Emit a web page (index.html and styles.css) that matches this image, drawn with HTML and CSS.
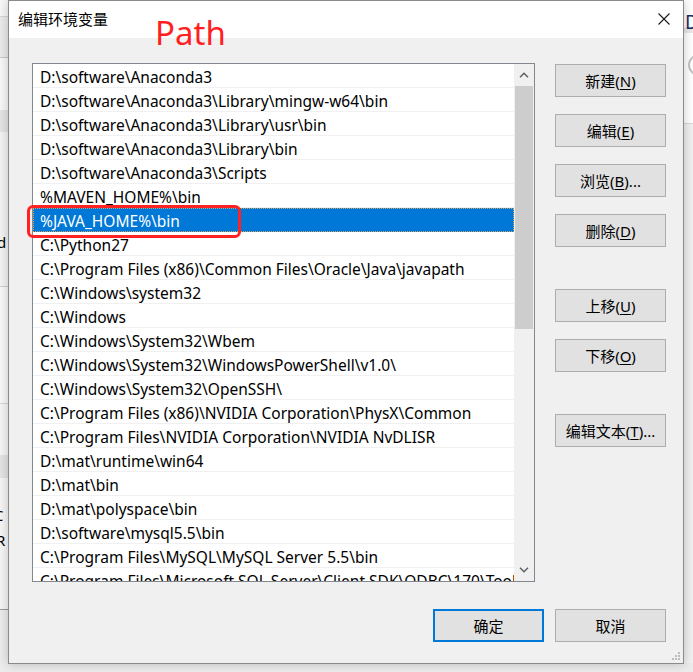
FILE: index.html
```html
<!DOCTYPE html>
<html lang="zh-CN">
<head>
<meta charset="utf-8">
<title>编辑环境变量</title>
<link rel="stylesheet" href="styles.css">
</head>
<body>
<div class="desk">
  <div class="back back-left">
    <span class="bl-d">d</span>
    <span class="bl-c">C</span>
    <span class="bl-r">R</span>
  </div>
  <div class="back back-right">
    <span class="br-d">D/</span>
    <span class="br-c"></span>
  </div>
  <div class="back back-bottom"></div>

  <div class="dialog">
    <div class="titlebar">
      <span class="title">编辑环境变量</span>
      <span class="close" aria-label="关闭">
        <svg width="12" height="12" viewBox="0 0 12 12"><path d="M0.5 0.5 L11.5 11.5 M11.5 0.5 L0.5 11.5" stroke="#1a1a1a" stroke-width="1.1" fill="none"/></svg>
      </span>
    </div>
    <div class="body">
      <div class="main">
        <div class="listbox">
          <div class="rows">
            <div class="row">D:\software\Anaconda3</div>
            <div class="row">D:\software\Anaconda3\Library\mingw-w64\bin</div>
            <div class="row">D:\software\Anaconda3\Library\usr\bin</div>
            <div class="row">D:\software\Anaconda3\Library\bin</div>
            <div class="row">D:\software\Anaconda3\Scripts</div>
            <div class="row">%MAVEN_HOME%\bin</div>
            <div class="row selected">%JAVA_HOME%\bin</div>
            <div class="row">C:\Python27</div>
            <div class="row">C:\Program Files (x86)\Common Files\Oracle\Java\javapath</div>
            <div class="row">C:\Windows\system32</div>
            <div class="row">C:\Windows</div>
            <div class="row">C:\Windows\System32\Wbem</div>
            <div class="row">C:\Windows\System32\WindowsPowerShell\v1.0\</div>
            <div class="row">C:\Windows\System32\OpenSSH\</div>
            <div class="row">C:\Program Files (x86)\NVIDIA Corporation\PhysX\Common</div>
            <div class="row">C:\Program Files\NVIDIA Corporation\NVIDIA NvDLISR</div>
            <div class="row">D:\mat\runtime\win64</div>
            <div class="row">D:\mat\bin</div>
            <div class="row">D:\mat\polyspace\bin</div>
            <div class="row">D:\software\mysql5.5\bin</div>
            <div class="row">C:\Program Files\MySQL\MySQL Server 5.5\bin</div>
            <div class="row">C:\Program Files\Microsoft SQL Server\Client SDK\ODBC\170\Tools\Binn\</div>
          </div>
          <div class="scrollbar">
            <div class="sb-btn">
              <svg width="10" height="6" viewBox="0 0 10 6"><path d="M1 5.2 L5 1.2 L9 5.2" stroke="#606060" stroke-width="1.5" fill="none"/></svg>
            </div>
            <div class="sb-track"><div class="sb-thumb"></div></div>
            <div class="sb-btn">
              <svg width="10" height="6" viewBox="0 0 10 6"><path d="M1 0.8 L5 4.8 L9 0.8" stroke="#606060" stroke-width="1.5" fill="none"/></svg>
            </div>
          </div>
          <div class="mark"></div>
        </div>
        <div class="side">
          <div class="group">
            <div class="btn">新建(<u>N</u>)</div>
            <div class="btn">编辑(<u>E</u>)</div>
            <div class="btn">浏览(<u>B</u>)...</div>
            <div class="btn">删除(<u>D</u>)</div>
          </div>
          <div class="group">
            <div class="btn">上移(<u>U</u>)</div>
            <div class="btn">下移(<u>O</u>)</div>
          </div>
          <div class="group">
            <div class="btn">编辑文本(<u>T</u>)...</div>
          </div>
        </div>
      </div>
      <div class="footer">
        <div class="btn default">确定</div>
        <div class="btn">取消</div>
      </div>
    </div>
    <span class="annot">Path</span>
    <svg class="grip" width="9" height="9" viewBox="0 0 9 9">
      <rect x="6" y="0" width="2" height="2" fill="#bdbdbd"/>
      <rect x="3" y="3" width="2" height="2" fill="#bdbdbd"/>
      <rect x="6" y="3" width="2" height="2" fill="#bdbdbd"/>
      <rect x="0" y="6" width="2" height="2" fill="#bdbdbd"/>
      <rect x="3" y="6" width="2" height="2" fill="#bdbdbd"/>
      <rect x="6" y="6" width="2" height="2" fill="#bdbdbd"/>
    </svg>
  </div>
</div>
</body>
</html>
```

FILE: styles.css
```css
* { box-sizing: border-box; }

html, body {
  margin: 0;
  padding: 0;
}

body {
  width: 693px;
  height: 672px;
  overflow: hidden;
  background: #f0f0f0;
  font-family: "Noto Sans", "Noto Sans CJK SC", sans-serif;
  font-size: 15px;
  color: #000;
}

.desk {
  position: relative;
  width: 693px;
  height: 672px;
  overflow: hidden;
}

/* background window fragments */
.back {
  position: absolute;
  overflow: hidden;
}

.back-left {
  left: 0;
  top: 0;
  width: 8px;
  height: 672px;
  background:
    linear-gradient(#f7f7f7 0 16px, #d6d6d6 16px 17px, #ebebeb 17px 57px, #c8c8c8 57px 58px,
      #f8f8f8 58px 110px, #e4e4e4 110px 132px, #f4f4f4 132px 286px, #cfcfcf 286px 287px,
      #f8f8f8 287px 403px, #d8d8d8 403px 404px, #f6f6f6 404px 455px, #e4e4e4 455px 478px,
      #f6f6f6 478px 609px, #9a9a9a 609px 610px, #ececec 610px 672px);
}

.bl-d, .bl-c, .bl-r {
  position: absolute;
  left: -3px;
  font-size: 15px;
  line-height: 16px;
}
.bl-d { top: 234px; }
.bl-c { top: 507px; left: -6px; }
.bl-r { top: 532px; left: -4px; }

.back-right {
  left: 684px;
  top: 0;
  width: 9px;
  height: 672px;
  background:
    linear-gradient(#ffffff 0 27px, #e8e8e8 27px 33px, #ffffff 33px 123px, #d8d8d8 123px 124px, #f0f0f0 124px 672px);
}

.br-d {
  position: absolute;
  left: 1px;
  top: 11px;
  font-size: 19px;
  line-height: 22px;
  color: #1e2f5a;
}

.br-c {
  position: absolute;
  left: 4px;
  top: 54px;
  width: 22px;
  height: 22px;
  border: 2px solid #c4c4c4;
  border-radius: 50%;
}

.back-bottom {
  left: 0;
  top: 663px;
  width: 693px;
  height: 9px;
  background: #ececec;
}

/* dialog window */
.dialog {
  position: absolute;
  left: 8px;
  top: 0;
  width: 676px;
  height: 664px;
  background: #f0f0f0;
  border: 1px solid #8a8a8a;
  box-shadow: 0 0 10px rgba(0, 0, 0, 0.22);
  display: flex;
  flex-direction: column;
}

.titlebar {
  height: 37px;
  flex: none;
  background: #ffffff;
  display: flex;
  align-items: center;
  justify-content: space-between;
  padding: 0 13px 0 9px;
}

.title {
  font-size: 15px;
  line-height: 20px;
  margin-top: -1px;
}

.close {
  display: flex;
  width: 12px;
  height: 12px;
  margin-top: -2px;
}

.body {
  flex: 1;
  display: flex;
  flex-direction: column;
  padding: 25px 17px 0 23px;
}

.main {
  display: flex;
  gap: 20px;
}

.listbox {
  position: relative;
  width: 503px;
  height: 519px;
  border: 1px solid #828790;
  background: #ffffff;
  display: flex;
}

.rows {
  width: 481px;
  overflow: hidden;
}

.row {
  height: 24px;
  border-bottom: 1px solid #f0f0f0;
  padding-left: 7px;
  font-size: 15.5px;
  line-height: 26px;
  white-space: nowrap;
  overflow: hidden;
}

.row.selected {
  background: #0078d7;
  color: #ffffff;
  border: 1px dotted #c7a26a;
  padding-left: 6px;
  line-height: 24px;
}

.scrollbar {
  width: 20px;
  background: #f0f0f0;
  display: flex;
  flex-direction: column;
}

.sb-btn {
  height: 22px;
  display: flex;
  align-items: center;
  justify-content: center;
  flex: none;
}

.sb-track {
  flex: 1;
  padding: 0 1px;
}

.sb-thumb {
  height: 243px;
  background: #cdcdcd;
}

.mark {
  position: absolute;
  left: -6px;
  top: 141px;
  width: 214px;
  height: 33px;
  border: 3px solid #ff2222;
  border-radius: 6px;
}

.side {
  display: flex;
  flex-direction: column;
  gap: 42px;
  padding-top: 1px;
}

.group {
  display: flex;
  flex-direction: column;
  gap: 17px;
}

.btn {
  width: 111px;
  height: 33px;
  background: #e1e1e1;
  border: 1px solid #adadad;
  display: flex;
  align-items: center;
  justify-content: center;
  font-size: 15px;
  line-height: 18px;
}

.btn u {
  text-decoration-thickness: 1px;
  text-underline-offset: 2px;
}

.btn.default {
  border: 2px solid #0078d7;
}

.footer {
  display: flex;
  justify-content: flex-end;
  gap: 11px;
  margin-top: 27px;
}

.annot {
  position: absolute;
  left: 146px;
  top: 10px;
  font-family: "Noto Sans", sans-serif;
  font-size: 33px;
  line-height: 44px;
  color: #ff1f1f;
}

.grip {
  position: absolute;
  right: 2px;
  bottom: 2px;
}
```
